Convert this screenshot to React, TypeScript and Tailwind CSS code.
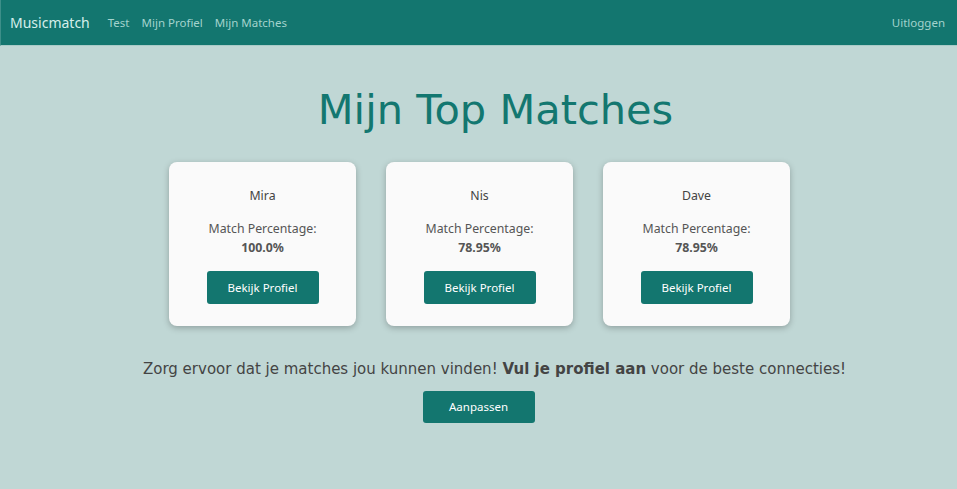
import React from "react";

const matches = [
    { name: "Mira", percentage: "100.0%" },
    { name: "Nis", percentage: "78.95%" },
    { name: "Dave", percentage: "78.95%" },
];

const segoe = "font-['Segoe_UI','Noto_Sans',sans-serif]";

const Navbar = () => {
    return (
        <nav className={`h-[46px] bg-[#13766f] border-l border-[#3d8f89] border-b border-b-[#a9cbc8] flex items-center justify-between px-[9px] ${segoe}`}>
            <div className="flex items-center">
                <span className="text-[14px] text-[#d5eeeb] mr-[18px]">Musicmatch</span>
                <span className="text-[11.5px] text-[#a3d3cd] mr-[12px]">Test</span>
                <span className="text-[11.5px] text-[#a3d3cd] mr-[12px]">Mijn Profiel</span>
                <span className="text-[11.5px] text-[#a3d3cd]">Mijn Matches</span>
            </div>
            <span className="text-[11.5px] text-[#a3d3cd] mr-[3px]">Uitloggen</span>
        </nav>
    );
};

const MatchCard = ({ name, percentage }: { name: string; percentage: string }) => {
    return (
        <div className={`w-[187px] h-[164px] bg-[#fafafa] rounded-[8px] shadow-[0_2px_6px_rgba(0,0,0,0.25)] flex flex-col items-center pt-[25px] ${segoe}`}>
            <span className="text-[12.3px] text-[#444]">{name}</span>
            <span className="text-[12.3px] text-[#555] mt-[15px]">Match Percentage:</span>
            <span className="text-[12.3px] font-bold text-[#555]">{percentage}</span>
            <button className="mt-[14px] w-[112px] h-[33px] bg-[#13766f] rounded-[3px] text-[11.5px] text-white">
                Bekijk Profiel
            </button>
        </div>
    );
};

export default function App() {
    return (
        <div className="min-h-[489px] bg-[#c0d7d5]">
            <Navbar />
            <div className="flex flex-col items-center">
                <h1 className="mt-[40px] ml-[34px] text-[41.5px] leading-[48px] text-[#137770] font-['DejaVu_Sans',sans-serif]">
                    Mijn Top Matches
                </h1>
                <div className="flex gap-[30px] mt-[28px] ml-[2px]">
                    {matches.map((m) => (
                        <MatchCard key={m.name} name={m.name} percentage={m.percentage} />
                    ))}
                </div>
                <p className="mt-[32px] ml-[32px] text-[15px] text-[#444] font-['DejaVu_Sans',sans-serif]">
                    Zorg ervoor dat je matches jou kunnen vinden! <b>Vul je profiel aan</b> voor de beste connecties!
                </p>
                <button className={`mt-[10px] w-[112px] h-[32px] bg-[#13766f] rounded-[3px] text-[11.5px] text-white ${segoe}`}>
                    Aanpassen
                </button>
            </div>
        </div>
    );
}
